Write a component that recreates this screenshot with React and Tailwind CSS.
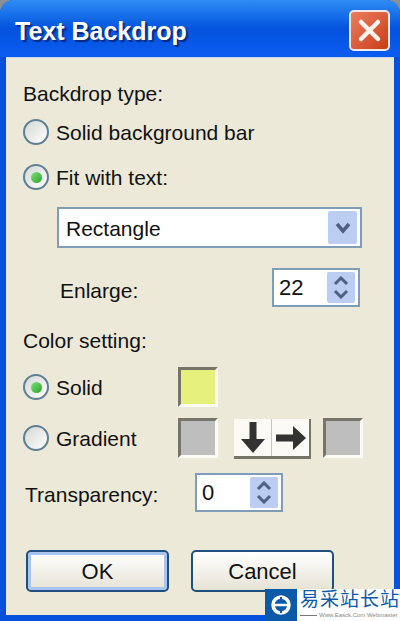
import React from "react";

const font = { fontFamily: '"Liberation Sans", "Noto Sans CJK SC", sans-serif' };

const Radio = ({ checked }) => (
  <span className="flex h-[26px] w-[26px] shrink-0 items-center justify-center rounded-full border-[2px] border-[#5f7f95] bg-gradient-to-br from-[#d5d8d4] to-[#ffffff]">
    {checked && <span className="h-[11px] w-[11px] rounded-full bg-gradient-to-br from-[#7fe07f] to-[#1fa51f]" />}
  </span>
);

const Swatch = ({ color }) => (
  <div className={`h-[40px] w-[40px] shrink-0 border-[3px] border-t-[#77746a] border-l-[#77746a] border-r-[#fbfaf5] border-b-[#fbfaf5] ${color}`} />
);

const Spin = ({ value, width }) => (
  <div className={`flex h-[39px] items-center justify-between border-[2px] border-[#7f9db9] bg-white pl-[5px] pr-[3px] ${width}`}>
    <span className="text-[22px] leading-none text-[#111]">{value}</span>
    <div className="flex h-[31px] w-[28px] flex-col items-center justify-center gap-[3px] rounded-[2px] bg-[#bccdf2]">
      <svg width="16" height="10" viewBox="0 0 16 10"><path d="M2 8 L8 2 L14 8" fill="none" stroke="#4d6185" strokeWidth="3" /></svg>
      <svg width="16" height="10" viewBox="0 0 16 10"><path d="M2 2 L8 8 L14 2" fill="none" stroke="#4d6185" strokeWidth="3" /></svg>
    </div>
  </div>
);

const Button = ({ children, active }) => (
  <div className={`flex h-[42px] w-[143px] items-center justify-center rounded-[5px] border-[2px] border-[#1f4f7f] bg-gradient-to-b from-white to-[#e6e3d6] pt-[2px] text-[22px] text-[#111] ${active ? "shadow-[inset_0_0_0_3px_#a9c4ee]" : ""}`}>
    {children}
  </div>
);

export default function App() {
  return (
    <div className="relative h-[621px] w-[400px] overflow-hidden bg-[#8a8f94] text-[#111]" style={font}>
      <div className="flex h-full flex-col rounded-t-[14px] bg-[#0550dc]">
        {/* title bar */}
        <div className="flex h-[57px] shrink-0 items-center justify-between rounded-t-[14px] bg-gradient-to-b from-[#2f8cf5] via-[#0553de] to-[#0a5cf0] pl-[15px] pr-[10px]">
          <span className="pt-[6px] text-[25px] font-bold leading-none text-white [text-shadow:2px_2px_1px_#0a2a80]">Text Backdrop</span>
          <div className="mt-[3px] flex h-[41px] w-[41px] items-center justify-center rounded-[5px] border-[2px] border-[#f0e8e4] bg-gradient-to-br from-[#ec7d5c] to-[#c93a12]">
            <svg width="25" height="25" viewBox="0 0 25 25"><path d="M4 4 L21 21 M21 4 L4 21" stroke="#fff4ee" strokeWidth="4.5" strokeLinecap="round" /></svg>
          </div>
        </div>

        {/* dialog body */}
        <div className="mx-[6px] mb-[6px] flex flex-1 flex-col border-t-[1px] border-[#c9d6ee] bg-[#ece9d8] pl-[17px] pr-[30px] text-[21px] leading-none">
          <div className="mt-[21px] flex h-[28px] items-center">Backdrop type:</div>
          <div className="mt-[11px] flex h-[28px] items-center gap-[7px]"><Radio />Solid background bar</div>
          <div className="mt-[17px] flex h-[28px] items-center gap-[7px]"><Radio checked />Fit with text:</div>

          {/* dropdown */}
          <div className="ml-[34px] mt-[16px] flex h-[41px] w-[305px] items-center justify-between border-[2px] border-[#7f9db9] bg-white pl-[7px] pr-[3px]">
            <span className="pt-[2px]">Rectangle</span>
            <div className="flex h-[33px] w-[29px] items-center justify-center rounded-[2px] bg-[#bccdf2]">
              <svg width="18" height="12" viewBox="0 0 18 12"><path d="M3 2 L9 9 L15 2" fill="none" stroke="#4d6185" strokeWidth="3.5" /></svg>
            </div>
          </div>

          <div className="ml-[37px] mt-[20px] flex h-[39px] items-center justify-between">
            <span className="pt-[6px]">Enlarge:</span>
            <Spin value="22" width="w-[88px] mr-[4px]" />
          </div>

          <div className="mt-[19px] flex h-[28px] items-center">Color setting:</div>

          <div className="mt-[13px] flex h-[40px] items-center">
            <Radio checked />
            <span className="ml-[7px] w-[122px]">Solid</span>
            <Swatch color="bg-[#e6f07c]" />
          </div>

          <div className="mt-[11px] flex h-[40px] items-center">
            <Radio />
            <span className="ml-[7px] w-[122px]">Gradient</span>
            <Swatch color="bg-[#bebebe]" />
            <div className="ml-[16px] mt-[2px] flex h-[40px] w-[77px] border-b-[3px] border-r-[2px] border-[#77746a] bg-[#fbfaf5]">
              <div className="flex flex-1 items-center justify-center border-r-[1px] border-[#c9c6b8]">
                <svg width="26" height="33" viewBox="0 0 26 33"><path d="M9.5 1 H16.5 V18 H25 L13 32 L1 18 H9.5 Z" fill="#333" /></svg>
              </div>
              <div className="flex flex-1 items-center justify-center">
                <svg width="32" height="26" viewBox="0 0 32 26"><path d="M1 9.5 H18 V1 L31 13 L18 25 V16.5 H1 Z" fill="#333" /></svg>
              </div>
            </div>
            <div className="ml-[12px]"><Swatch color="bg-[#bebebe]" /></div>
          </div>

          <div className="ml-[2px] mt-[15px] flex h-[39px] items-center">
            <span className="w-[170px] pt-[4px]">Transparency:</span>
            <Spin value="0" width="w-[88px]" />
          </div>

          <div className="ml-[3px] mt-[38px] flex gap-[22px]">
            <Button active>OK</Button>
            <Button>Cancel</Button>
          </div>
        </div>
      </div>

      {/* site watermark */}
      <div className="absolute bottom-0 right-0 flex h-[32px] w-[135px] bg-white">
        <div className="flex w-[32px] shrink-0 items-center justify-center bg-[#0b5aa8]">
          <svg width="22" height="22" viewBox="0 0 22 22">
            <circle cx="11" cy="11" r="8" fill="none" stroke="#fff" strokeWidth="3.5" />
            <path d="M4 11 H18" stroke="#fff" strokeWidth="2.5" />
            <path d="M11 3 V8 M11 14 V19" stroke="#0b5aa8" strokeWidth="2" />
          </svg>
        </div>
        <div className="flex flex-1 flex-col pl-[3px]">
          <span className="whitespace-nowrap text-[19px] leading-[21px] tracking-[1px] text-[#0b5aa8]">易采站长站</span>
          <div className="flex items-center gap-[2px] pt-[1px]">
            <span className="h-[1px] w-[17px] bg-[#777]" />
            <span className="whitespace-nowrap text-[6px] leading-[8px] text-[#888]">Www.Easck.Com Webmaster</span>
          </div>
        </div>
      </div>
    </div>
  );
}
